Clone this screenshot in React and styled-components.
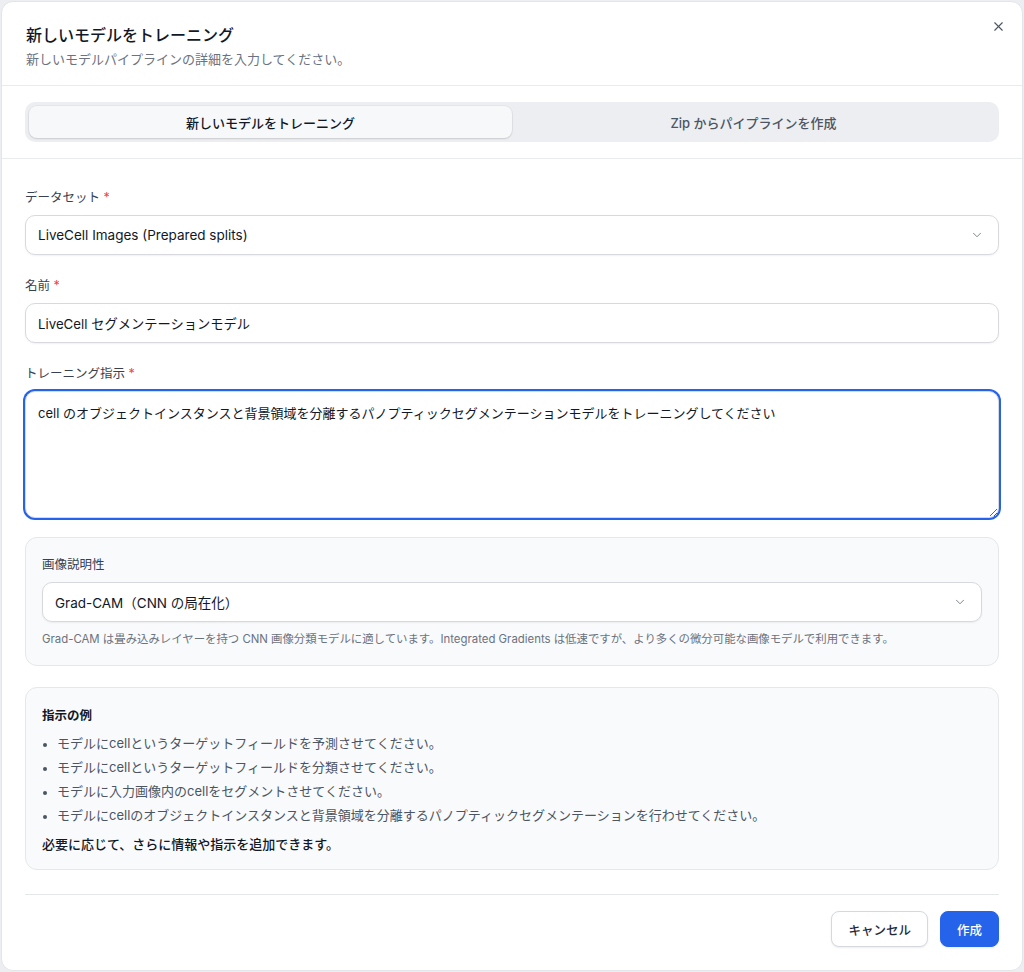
import React from 'react'
import styled, { createGlobalStyle } from 'styled-components'
import { ChevronDown, X } from 'lucide-react'

const GlobalStyle = createGlobalStyle`
  * { box-sizing: border-box; }
  body {
    margin: 0;
    background: #eceef1;
    font-family: 'Inter', 'Noto Sans CJK JP', sans-serif;
    color: #111827;
  }
`

const examples = [
  'モデルにcellというターゲットフィールドを予測させてください。',
  'モデルにcellというターゲットフィールドを分類させてください。',
  'モデルに入力画像内のcellをセグメントさせてください。',
  'モデルにcellのオブジェクトインスタンスと背景領域を分離するパノプティックセグメンテーションを行わせてください。',
]

export default function App() {
  return (
    <>
      <GlobalStyle />
      <Dialog>
        <Header>
          <Title>新しいモデルをトレーニング</Title>
          <Subtitle>新しいモデルパイプラインの詳細を入力してください。</Subtitle>
          <CloseButton aria-label="閉じる">
            <X size={15} strokeWidth={1.8} />
          </CloseButton>
        </Header>

        <TabsSection>
          <TabList>
            <Tab active>新しいモデルをトレーニング</Tab>
            <Tab>Zip からパイプラインを作成</Tab>
          </TabList>
        </TabsSection>

        <Body>
          <Field>
            <Label>
              データセット <Required>*</Required>
            </Label>
            <Select>
              <span>LiveCell Images (Prepared splits)</span>
              <ChevronDown size={14} strokeWidth={1.5} color="#6b7280" />
            </Select>
          </Field>

          <Field>
            <Label>
              名前 <Required>*</Required>
            </Label>
            <Input defaultValue="LiveCell セグメンテーションモデル" />
          </Field>

          <Field>
            <Label>
              トレーニング指示 <Required>*</Required>
            </Label>
            <TextArea defaultValue="cell のオブジェクトインスタンスと背景領域を分離するパノプティックセグメンテーションモデルをトレーニングしてください" />
          </Field>

          <Card>
            <Label>画像説明性</Label>
            <Select>
              <span>Grad-CAM（CNN の局在化）</span>
              <ChevronDown size={14} strokeWidth={1.5} color="#6b7280" />
            </Select>
            <Help>
              Grad-CAM は畳み込みレイヤーを持つ CNN 画像分類モデルに適しています。Integrated Gradients は低速ですが、より多くの微分可能な画像モデルで利用できます。
            </Help>
          </Card>

          <ExampleCard>
            <ExampleTitle>指示の例</ExampleTitle>
            <ExampleList>
              {examples.map(text => (
                <li key={text}>{text}</li>
              ))}
            </ExampleList>
            <ExampleNote>必要に応じて、さらに情報や指示を追加できます。</ExampleNote>
          </ExampleCard>
        </Body>

        <Footer>
          <Button>キャンセル</Button>
          <Button primary>作成</Button>
        </Footer>
      </Dialog>
    </>
  )
}

const Dialog = styled.div`
  position: relative;
  width: 1022px;
  height: 970px;
  margin: 1px 0 0 1px;
  background: #ffffff;
  border: 1px solid #e3e5e9;
  border-radius: 12px;
  display: flex;
  flex-direction: column;
  overflow: hidden;
`

const Header = styled.div`
  position: relative;
  padding: 21px 24px 16px;
  border-bottom: 1px solid #e9ebef;
`

const Title = styled.h2`
  margin: 0;
  font-size: 16px;
  line-height: 24px;
  font-weight: 500;
  color: #111827;
`

const Subtitle = styled.p`
  margin: 2px 0 0;
  font-size: 13px;
  line-height: 20px;
  color: #6b7280;
`

const CloseButton = styled.button`
  position: absolute;
  top: 14px;
  right: 14px;
  width: 20px;
  height: 20px;
  padding: 0;
  border: none;
  background: none;
  color: #4b5563;
  display: flex;
  align-items: center;
  justify-content: center;
`

const TabsSection = styled.div`
  padding: 16px 23px;
  border-bottom: 1px solid #e9ebef;
`

const TabList = styled.div`
  display: flex;
  padding: 4px;
  height: 40px;
  background: #edeef1;
  border-radius: 10px;
`

const Tab = styled.div`
  flex: 1;
  display: flex;
  align-items: center;
  justify-content: center;
  border-radius: 8px;
  font-size: 13px;
  font-weight: 500;
  color: ${props => (props.active ? '#111827' : '#4b5563')};
  background: ${props => (props.active ? '#f7f8fa' : 'transparent')};
  box-shadow: ${props =>
    props.active ? '0 1px 2px rgba(0,0,0,0.12), 0 0 0 1px rgba(0,0,0,0.03)' : 'none'};
`

const Body = styled.div`
  flex: 1;
  padding: 29px 23px 0;
  display: flex;
  flex-direction: column;
  gap: 21px;
`

const Field = styled.div`
  display: flex;
  flex-direction: column;
`

const Label = styled.label`
  display: block;
  font-size: 12.5px;
  line-height: 20px;
  font-weight: 400;
  color: #374151;
  margin-bottom: 7px;
`

const Required = styled.span`
  color: #ef4444;
`

const controlBase = `
  width: 100%;
  height: 40px;
  padding: 0 12px;
  border: 1px solid #d7d9de;
  border-radius: 10px;
  background: #ffffff;
  font-family: 'Inter', 'Noto Sans CJK JP', sans-serif;
  font-size: 13.5px;
  color: #111827;
  box-shadow: 0 1px 2px rgba(16, 24, 40, 0.06);
`

const Select = styled.div`
  ${controlBase}
  display: flex;
  align-items: center;
  justify-content: space-between;
  padding-right: 14px;
`

const Input = styled.input`
  ${controlBase}
  font-size: 13.25px;
  outline: none;
`

const TextArea = styled.textarea`
  ${controlBase}
  height: 127px;
  padding: 11px 12px;
  font-size: 13px;
  line-height: 20px;
  resize: vertical;
  outline: none;
  box-shadow: 0 0 0 2px #2563eb;
`

const Card = styled.div`
  margin-top: -2px;
  background: #f9fafb;
  border: 1px solid #e5e7eb;
  border-radius: 12px;
  padding: 17px 16px 18px;
`

const Help = styled.p`
  margin: 9px 0 0;
  font-size: 11.4px;
  line-height: 16px;
  color: #6b7280;
`

const ExampleCard = styled(Card)`
  margin-top: 0;
  padding: 18px 16px 15px;
`

const ExampleTitle = styled.div`
  font-size: 12.5px;
  line-height: 20px;
  font-weight: 600;
  color: #111827;
`

const ExampleList = styled.ul`
  margin: 5px 0 0;
  padding-left: 15px;
  font-size: 13px;
  line-height: 24px;
  color: #4b5563;

  li::marker {
    color: #4b5563;
    font-size: 11px;
  }
`

const ExampleNote = styled.p`
  margin: 7px 0 0;
  font-size: 13px;
  line-height: 20px;
  font-weight: 500;
  color: #111827;
`

const Footer = styled.div`
  margin: 24px 23px 0;
  padding: 16px 0 23px;
  border-top: 1px solid #e5e7eb;
  display: flex;
  justify-content: flex-end;
  gap: 12px;
`

const Button = styled.button`
  height: 36px;
  padding: 0 16px;
  border-radius: 8px;
  font-family: 'Inter', 'Noto Sans CJK JP', sans-serif;
  font-size: 12.5px;
  font-weight: 500;
  border: 1px solid ${props => (props.primary ? '#2563eb' : '#d5d8dd')};
  background: ${props => (props.primary ? '#2563eb' : '#ffffff')};
  color: ${props => (props.primary ? '#ffffff' : '#1f2937')};
  box-shadow: 0 1px 2px rgba(16, 24, 40, 0.08);
`
